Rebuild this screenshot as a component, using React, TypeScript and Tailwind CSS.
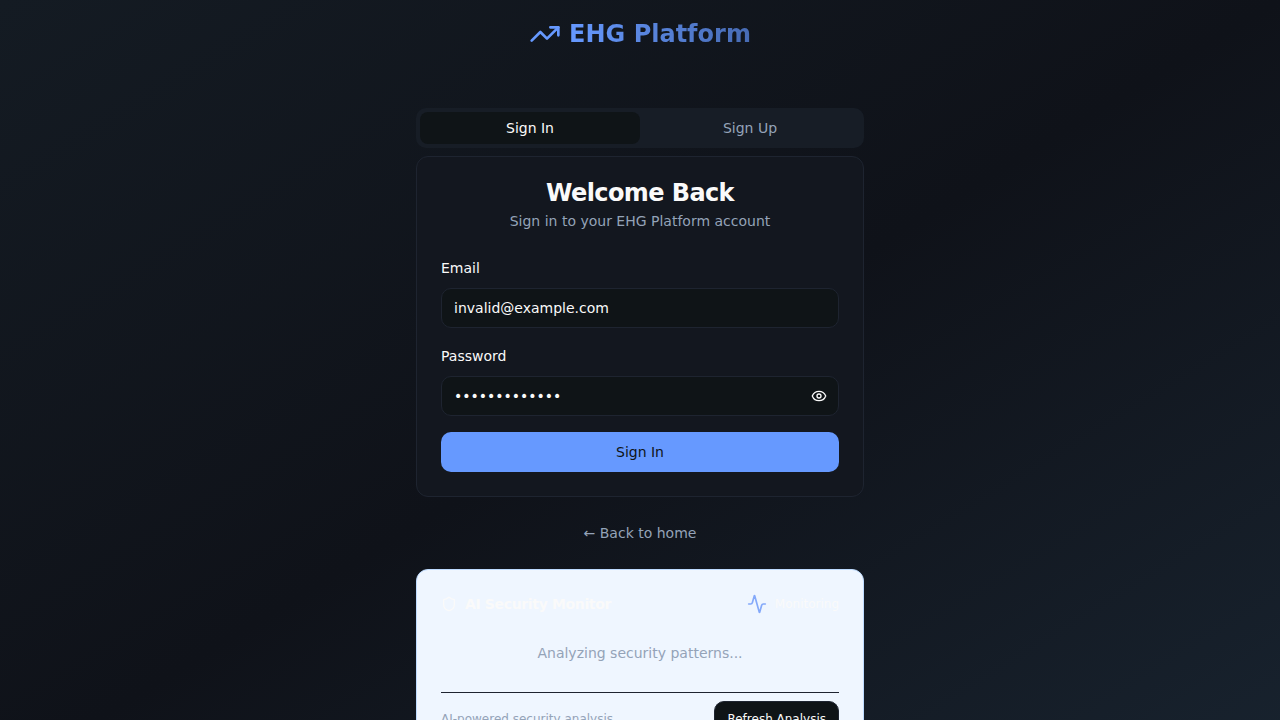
import { useState } from 'react';
import { Activity, Eye, EyeOff, Shield, TrendingUp } from 'lucide-react';

function Brand() {
  return (
    <div className="flex items-center justify-center gap-2">
      <TrendingUp className="size-8 text-[#6699ff]" />
      <span className="bg-gradient-to-r from-[#6699ff] to-[#476bb3] bg-clip-text text-2xl font-bold text-transparent">
        EHG Platform
      </span>
    </div>
  );
}

function SignInForm() {
  const [visible, setVisible] = useState(false);
  const field =
    'h-10 w-full rounded-[10px] border border-[#1e2430] bg-[#0f1417] px-3 text-sm text-[#fafafa] outline-none';
  return (
    <form className="flex flex-col gap-4 px-6 pb-6" onSubmit={(e) => e.preventDefault()}>
      <div className="flex flex-col gap-2">
        <label htmlFor="email" className="py-0.5 text-sm font-medium">Email</label>
        <input id="email" type="email" defaultValue="invalid@example.com" className={field} />
      </div>
      <div className="flex flex-col gap-2">
        <label htmlFor="password" className="py-0.5 text-sm font-medium">Password</label>
        <div className="relative">
          <input id="password" type={visible ? 'text' : 'password'} defaultValue="wrongpassword" className={field} />
          <button
            type="button"
            aria-label={visible ? 'Hide password' : 'Show password'}
            onClick={() => setVisible(!visible)}
            className="absolute inset-y-0 right-0 flex items-center px-3"
          >
            {visible ? <EyeOff className="size-4" /> : <Eye className="size-4" />}
          </button>
        </div>
      </div>
      <button type="submit" className="h-10 rounded-[10px] bg-[#6699ff] text-sm font-medium text-[#0f1417]">
        Sign In
      </button>
    </form>
  );
}

function SecurityMonitor() {
  return (
    <section className="rounded-xl border border-[#bedbff] bg-[#eff6ff] p-6 text-[#fafafa]">
      <div className="flex h-5 items-center justify-between">
        <h3 className="flex items-center gap-2 text-sm font-semibold tracking-tight">
          <Shield className="size-4" />
          AI Security Monitor
        </h3>
        <div className="flex items-center gap-2 text-xs">
          <Activity className="size-5 text-[#84a9fa]" />
          Monitoring
        </div>
      </div>
      <p className="py-[29px] text-center text-sm text-[#94a3b8]">Analyzing security patterns...</p>
      <div className="flex items-center justify-between border-t border-[#1e2430] pt-2">
        <span className="text-xs text-[#94a3b8]">AI-powered security analysis</span>
        <button type="button" className="h-9 rounded-[10px] border border-[#1e2430] bg-[#0f1417] px-3 text-xs font-medium">
          Refresh Analysis
        </button>
      </div>
    </section>
  );
}

export default function App() {
  return (
    <div className="min-h-screen bg-gradient-to-br from-[#141b23] via-[#0f1219] to-[#18232f] px-4 pt-[18px] pb-4 font-['DejaVu_Sans',sans-serif] text-[#fafafa]">
      <main className="mx-auto flex w-full max-w-md flex-col">
        <header className="mb-[58px]">
          <Brand />
        </header>
        <div role="tablist" className="grid h-10 grid-cols-2 rounded-[10px] bg-[#171d26] p-1 text-sm font-medium">
          <button role="tab" aria-selected="true" className="rounded-lg bg-[#0f1417]">Sign In</button>
          <button role="tab" aria-selected="false" className="rounded-lg text-[#94a3b8]">Sign Up</button>
        </div>
        <section className="mt-2 rounded-xl border border-[#1e2430] bg-[#13171f]">
          <div className="flex flex-col gap-0.5 px-6 pt-5 pb-[25px] text-center">
            <h1 className="text-2xl font-bold tracking-tight">Welcome Back</h1>
            <p className="text-sm text-[#94a3b8]">Sign in to your EHG Platform account</p>
          </div>
          <SignInForm />
        </section>
        <a href="#home" className="mx-auto my-[26px] text-sm text-[#94a3b8]">← Back to home</a>
        <SecurityMonitor />
      </main>
    </div>
  );
}
